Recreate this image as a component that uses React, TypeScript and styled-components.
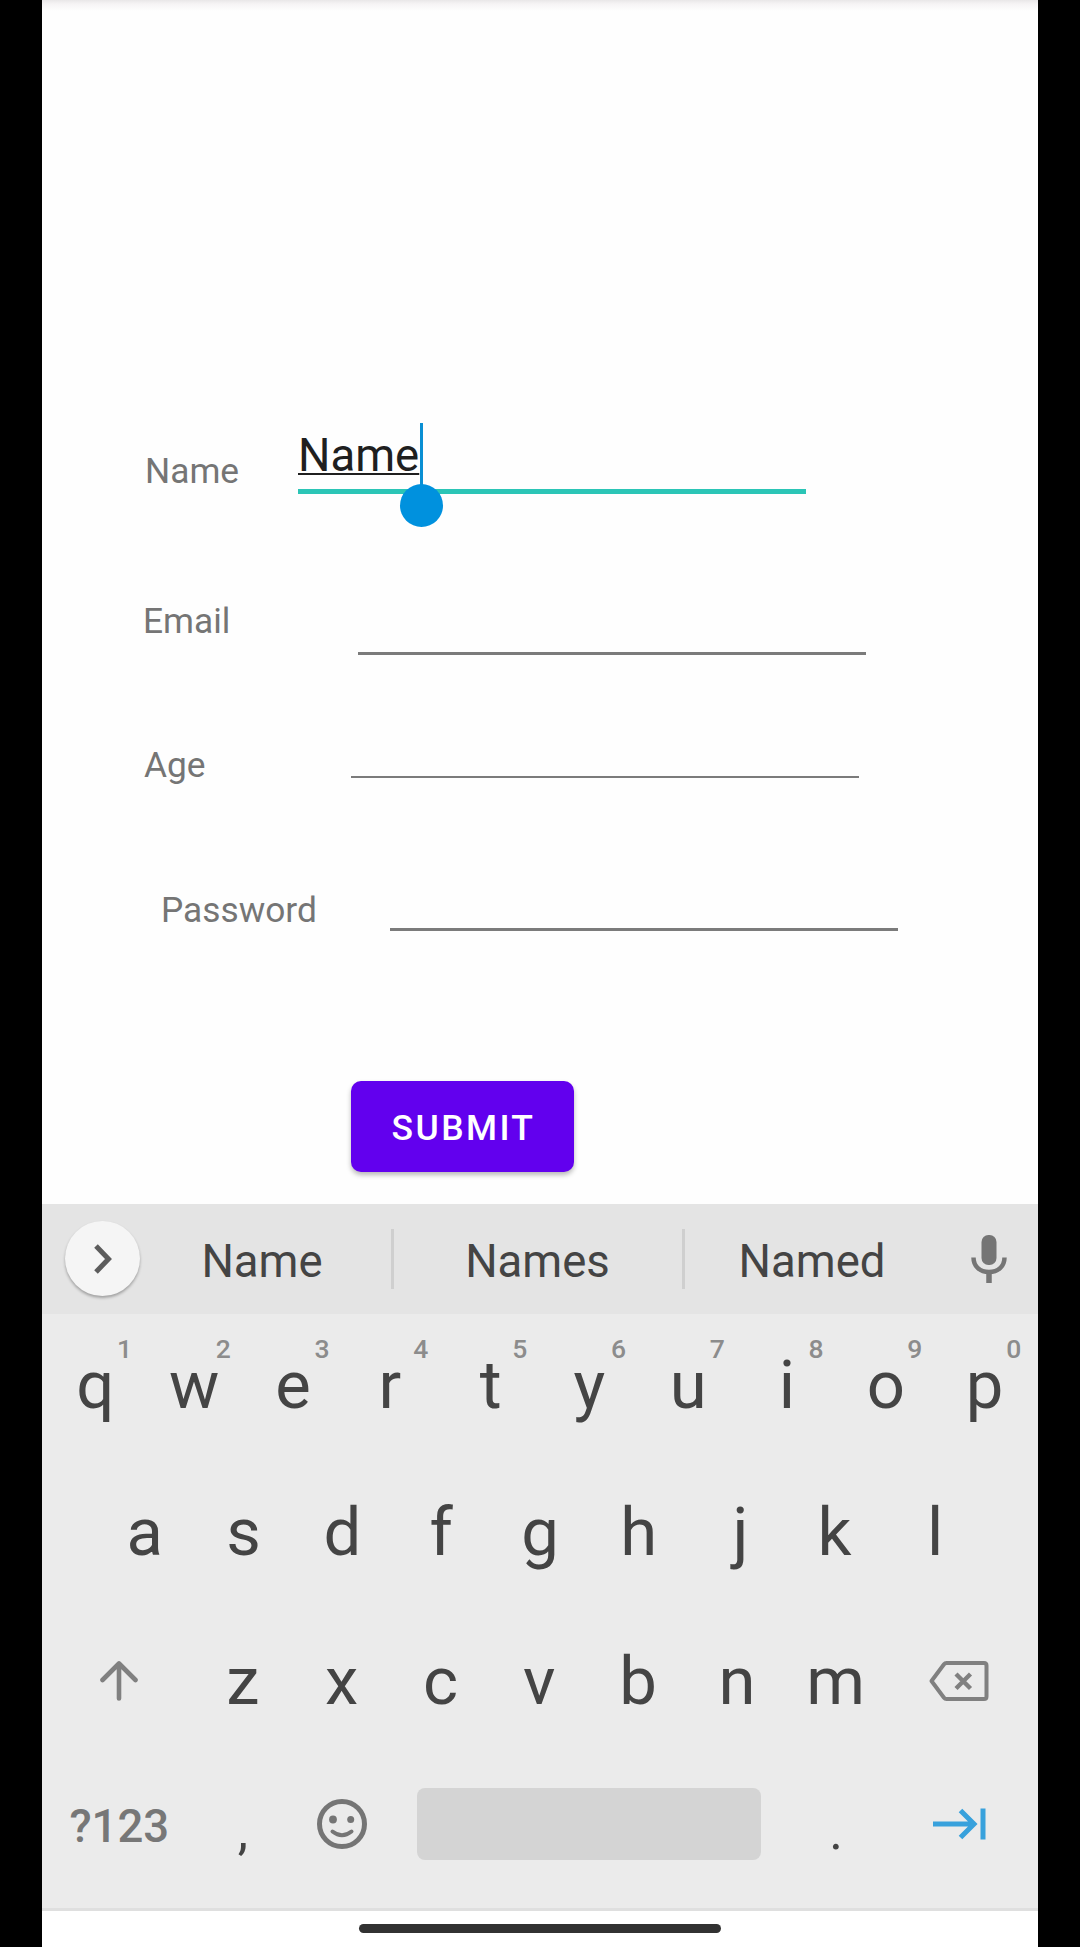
import React from "react";
import styled, { createGlobalStyle } from "styled-components";

const GlobalStyle = createGlobalStyle`
  * { box-sizing: border-box; }
  body { margin: 0; background: #000; }
`;

const Screen = styled.div`
  display: flex;
  flex-direction: column;
  width: 996px;
  height: 1947px;
  margin: 0 auto;
  background: #fefefe;
  font-family: Roboto, "Liberation Sans", sans-serif;
  overflow: hidden;
`;

const Form = styled.form`
  height: 1204px;
  padding-top: 415px;
  background: linear-gradient(#e9e7e8, #f6f4f5 4px, #fefefe 11px) no-repeat top / 100% 11px;
`;

const FieldRow = styled.div<{ $indent: number; $height: number; $gap: number }>`
  display: flex;
  align-items: flex-start;
  height: ${(p) => p.$height}px;
  margin-bottom: ${(p) => p.$gap}px;
  padding-left: ${(p) => p.$indent}px;
`;

const Label = styled.label<{ $width: number; $top?: number }>`
  flex: none;
  width: ${(p) => p.$width}px;
  margin-top: ${(p) => p.$top ?? 0}px;
  font-size: 35.3px;
  line-height: 42px;
  color: #757575;
`;

const Input = styled.div<{ $height: number; $line: number; $active?: boolean }>`
  width: 508px;
  height: ${(p) => p.$height}px;
  border-bottom: ${(p) => p.$line}px solid ${(p) => (p.$active ? "#2bc5b6" : "#7b7b7b")};
  padding-top: ${(p) => (p.$active ? 14 : 0)}px;
  font-size: 45.5px;
  line-height: 54px;
  color: #1f1f1f;
`;

const Typed = styled.span`
  position: relative;
  display: inline-block;
  text-decoration: underline;
  text-decoration-thickness: 2px;
  text-underline-offset: 2px;
  text-decoration-skip-ink: none;
`;

const Caret = styled.span`
  position: absolute;
  left: 122px;
  top: -6px;
  width: 3px;
  height: 64px;
  background: #0a8fd3;
`;

const Handle = styled.span`
  position: absolute;
  left: 102px;
  top: 55px;
  width: 43px;
  height: 43px;
  border-radius: 50%;
  background: #0091de;
`;

const Submit = styled.button`
  display: block;
  width: 223px;
  height: 91px;
  margin: 150px 0 0 309px;
  padding: 3px 0 0 2px;
  border: 0;
  border-radius: 10px;
  background: #6200ee;
  box-shadow: 0 3px 5px rgba(0, 0, 0, 0.28);
  color: #fff;
  font: 500 35.5px Roboto, "Liberation Sans", sans-serif;
  letter-spacing: 2.4px;
`;

const Strip = styled.div`
  display: flex;
  align-items: center;
  height: 110px;
  padding-bottom: 1px;
  background: #e4e4e4;
`;

const Expand = styled.button`
  display: grid;
  place-items: center;
  width: 75px;
  height: 75px;
  margin: 0 0 0 23px;
  padding: 0;
  border: 0;
  border-radius: 50%;
  background: #f5f5f5;
  box-shadow: 0 2px 3px rgba(0, 0, 0, 0.3);
`;

const Suggestion = styled.span<{ $width: number; $inset?: number }>`
  width: ${(p) => p.$width}px;
  padding: 6px ${(p) => p.$inset ?? 1}px 0 0;
  text-align: center;
  font-size: 45.5px;
  line-height: 54px;
  color: #444;
`;

const Divider = styled.span`
  width: 3px;
  height: 60px;
  background: #cfcfcf;
`;

const MicSlot = styled.span`
  display: flex;
  margin-left: 31px;
`;

const Keys = styled.div`
  height: 597px;
  background: #ebebeb;
  border-bottom: 3px solid #dfdfdf;
`;

const KeyRow = styled.div<{ $drop?: number; $start?: number }>`
  display: flex;
  height: 147px;
  padding-left: ${(p) => p.$start ?? 3}px;
  line-height: ${(p) => 141 + 2 * (p.$drop ?? 1)}px;
`;

const Key = styled.div<{ $nudge?: number }>`
  position: relative;
  left: ${(p) => p.$nudge ?? 0}px;
  width: 98.8px;
  text-align: center;
  font-size: 67px;
  color: #444;
`;

const Hint = styled.span<{ $nudge?: number }>`
  position: absolute;
  left: ${(p) => 58.5 - (p.$nudge ?? 0)}px;
  top: 22px;
  width: 40px;
  font-size: 26.5px;
  font-weight: 500;
  line-height: 26px;
  color: #8c8c8c;
`;

const IconKey = styled.div<{ $wide?: boolean; $center: number }>`
  display: flex;
  justify-content: center;
  align-items: center;
  width: ${(p) => (p.$wide ? 148.5 : 98.8)}px;
  height: ${(p) => p.$center * 2}px;
`;

const ModeKey = styled.div`
  width: 148.5px;
  text-align: center;
  font-size: 45.5px;
  font-weight: 500;
  line-height: 144px;
  color: #777;
`;

const Punctuation = styled.div`
  width: 98.8px;
  text-align: center;
  font-size: 52px;
  line-height: 153px;
  color: #444;
`;

const SpaceBar = styled.div`
  width: 344px;
  height: 72px;
  margin: 33px 25.8px 0;
  border-radius: 8px;
  background: #d4d4d4;
`;

const NavBar = styled.div`
  display: flex;
  justify-content: center;
  align-items: flex-start;
  height: 36px;
  padding-top: 13px;
  background: #fff;
`;

const Pill = styled.span`
  width: 362px;
  height: 9px;
  border-radius: 5px;
  background: #323232;
`;

/* Optical centring for the asymmetric letters. */
const opticalShift: Record<string, number> = { j: 3, k: -2, r: -2 };

export default function App() {
  return (
    <>
      <GlobalStyle />
      <Screen>
        <Form>
          <FieldRow $indent={103} $height={79} $gap={106}>
            <Label $width={153} $top={35}>Name</Label>
            <Input $height={79} $line={5} $active>
              <Typed>
                Name
                <Caret />
                <Handle />
              </Typed>
            </Input>
          </FieldRow>
          <FieldRow $indent={101} $height={55} $gap={89}>
            <Label $width={215}>Email</Label>
            <Input $height={55} $line={3} />
          </FieldRow>
          <FieldRow $indent={102} $height={42} $gap={103}>
            <Label $width={207}>Age</Label>
            <Input $height={34} $line={2} />
          </FieldRow>
          <FieldRow $indent={119} $height={42} $gap={0}>
            <Label $width={229}>Password</Label>
            <Input $height={42} $line={3} />
          </FieldRow>
          <Submit type="button">SUBMIT</Submit>
        </Form>

        <Strip>
          <Expand type="button" aria-label="Expand">
            <svg width="20" height="30" viewBox="0 0 20 30" fill="none" stroke="#5c5c5c" strokeWidth="5">
              <path d="M3 2 15.500 15 3 28" />
            </svg>
          </Expand>
          <Suggestion $width={251} $inset={7}>Name</Suggestion>
          <Divider />
          <Suggestion $width={288}>Names</Suggestion>
          <Divider />
          <Suggestion $width={255}>Named</Suggestion>
          <MicSlot>
            <svg width="36" height="48" viewBox="0 0 36 48" fill="none">
              <rect x="10.5" y="0" width="15" height="30" rx="7" fill="#757575" />
              <path d="M2.500 22.500C2.500 31.500 9 37 18 37S33.500 31.500 33.500 22.500" stroke="#757575" strokeWidth="4.500" />
              <path d="M18 37V48" stroke="#757575" strokeWidth="5.500" />
            </svg>
          </MicSlot>
        </Strip>

        <Keys>
          <KeyRow $start={4}>
            {"qwertyuiop".split("").map((letter, i) => (
              <Key key={letter} $nudge={opticalShift[letter]}>
                {letter}
                <Hint $nudge={opticalShift[letter]}>{(i + 1) % 10}</Hint>
              </Key>
            ))}
          </KeyRow>
          <KeyRow $start={53.4}>
            {"asdfghjkl".split("").map((letter) => (
              <Key key={letter} $nudge={opticalShift[letter]}>{letter}</Key>
            ))}
          </KeyRow>
          <KeyRow $drop={3}>
            <IconKey $wide $center={72.5}>
              <svg width="38" height="40" viewBox="0 0 38 40" fill="none" stroke="#808080" strokeWidth="4.6" strokeLinecap="round" strokeLinejoin="round">
                <path d="M19 37.500V2.500M2.500 19 19 2.500 35.500 19" />
              </svg>
            </IconKey>
            {"zxcvbnm".split("").map((letter) => (
              <Key key={letter}>{letter}</Key>
            ))}
            <IconKey $wide $center={72.5}>
              <svg width="60" height="40" viewBox="0 0 60 40" fill="none" stroke="#808080" strokeWidth="4" strokeLinejoin="round">
                <path d="M17.500 2H55Q57.500 2 57.500 4.500V35.500Q57.500 38 55 38H17.500Q16 38 15 36.700L2.500 20 15 3.300Q16 2 17.500 2Z" />
                <path d="M27 13 41.500 27.500M41.500 13 27 27.500" strokeWidth="4.400" />
              </svg>
            </IconKey>
          </KeyRow>
          <KeyRow>
            <ModeKey>?123</ModeKey>
            <Punctuation>,</Punctuation>
            <IconKey $center={68.5}>
              <svg width="50" height="50" viewBox="0 0 50 50" fill="none" stroke="#757575">
                <circle cx="25" cy="25" r="22.500" strokeWidth="5" />
                <circle cx="16" cy="20.500" r="3.900" fill="#757575" stroke="none" />
                <circle cx="33.700" cy="20.500" r="3.500" fill="#757575" stroke="none" />
                <path d="M15.500 32.500Q25 40 34.500 32.500" strokeWidth="4" strokeLinecap="round" />
              </svg>
            </IconKey>
            <SpaceBar />
            <Punctuation>.</Punctuation>
            <IconKey $wide $center={68.5}>
              <svg width="53" height="32" viewBox="0 0 53 32" fill="none" stroke="#38a1dc" strokeWidth="5">
                <path d="M0 16H41M27.500 2.500 41 16 27.500 29.500M50 .5V31.500" />
              </svg>
            </IconKey>
          </KeyRow>
        </Keys>

        <NavBar>
          <Pill />
        </NavBar>
      </Screen>
    </>
  );
}
